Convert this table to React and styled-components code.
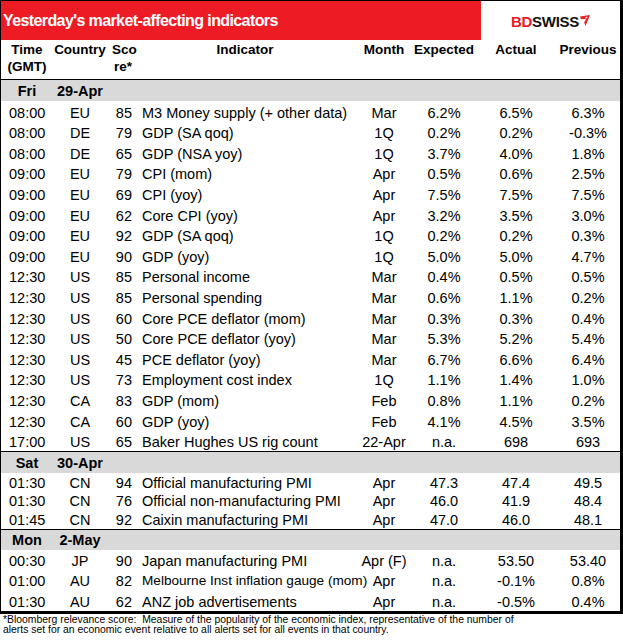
import React from "react";
import styled, { createGlobalStyle } from "styled-components";

const GlobalStyle = createGlobalStyle`
  body {
    margin: 0;
    background: #ffffff;
    font-family: "Liberation Sans", Arial, sans-serif;
    color: #000000;
  }
`;

const COLS = "52px 54px 27px 222px 56px 64px 80px 64px";

const sections = [
  {
    day: "Fri",
    date: "29-Apr",
    rowH: 20.6,
    dayH: 21,
    rule: false,
    rows: [
      ["08:00", "EU", "85", "M3 Money supply (+ other data)", "Mar", "6.2%", "6.5%", "6.3%"],
      ["08:00", "DE", "79", "GDP (SA qoq)", "1Q", "0.2%", "0.2%", "-0.3%"],
      ["08:00", "DE", "65", "GDP (NSA yoy)", "1Q", "3.7%", "4.0%", "1.8%"],
      ["09:00", "EU", "79", "CPI (mom)", "Apr", "0.5%", "0.6%", "2.5%"],
      ["09:00", "EU", "69", "CPI (yoy)", "Apr", "7.5%", "7.5%", "7.5%"],
      ["09:00", "EU", "62", "Core CPI (yoy)", "Apr", "3.2%", "3.5%", "3.0%"],
      ["09:00", "EU", "92", "GDP (SA qoq)", "1Q", "0.2%", "0.2%", "0.3%"],
      ["09:00", "EU", "90", "GDP (yoy)", "1Q", "5.0%", "5.0%", "4.7%"],
      ["12:30", "US", "85", "Personal income", "Mar", "0.4%", "0.5%", "0.5%"],
      ["12:30", "US", "85", "Personal spending", "Mar", "0.6%", "1.1%", "0.2%"],
      ["12:30", "US", "60", "Core PCE deflator (mom)", "Mar", "0.3%", "0.3%", "0.4%"],
      ["12:30", "US", "50", "Core PCE deflator (yoy)", "Mar", "5.3%", "5.2%", "5.4%"],
      ["12:30", "US", "45", "PCE deflator (yoy)", "Mar", "6.7%", "6.6%", "6.4%"],
      ["12:30", "US", "73", "Employment cost index", "1Q", "1.1%", "1.4%", "1.0%"],
      ["12:30", "CA", "83", "GDP (mom)", "Feb", "0.8%", "1.1%", "0.2%"],
      ["12:30", "CA", "60", "GDP (yoy)", "Feb", "4.1%", "4.5%", "3.5%"],
      ["17:00", "US", "65", "Baker Hughes US rig count", "22-Apr", "n.a.", "698", "693"],
    ],
  },
  {
    day: "Sat",
    date: "30-Apr",
    rowH: 18.6,
    dayH: 22,
    rule: true,
    rows: [
      ["01:30", "CN", "94", "Official manufacturing PMI", "Apr", "47.3", "47.4", "49.5"],
      ["01:30", "CN", "76", "Official non-manufacturing PMI", "Apr", "46.0", "41.9", "48.4"],
      ["01:45", "CN", "92", "Caixin manufacturing PMI", "Apr", "47.0", "46.0", "48.1"],
    ],
  },
  {
    day: "Mon",
    date: "2-May",
    rowH: 20.3,
    dayH: 21,
    rule: true,
    rows: [
      ["00:30", "JP", "90", "Japan manufacturing PMI", "Apr (F)", "n.a.", "53.50", "53.40"],
      ["01:00", "AU", "82", "Melbourne Inst inflation gauge (mom)", "Apr", "n.a.", "-0.1%", "0.8%", true],
      ["01:30", "AU", "62", "ANZ job advertisements", "Apr", "n.a.", "-0.5%", "0.4%"],
    ],
  },
];

const Frame = styled.div`
  width: 619px;
  border-top: 1px solid #000;
  border-left: 1px solid #000;
  border-right: 3px solid #000;
  border-bottom: 3px solid #000;
`;

const Banner = styled.div`
  display: flex;
  height: 39px;
`;

const Title = styled.div`
  width: 480px;
  background: #ed1c24;
  color: #ffffff;
  font-weight: bold;
  font-size: 16px;
  letter-spacing: -0.6px;
  display: flex;
  align-items: center;
  padding-left: 2px;
  box-sizing: border-box;
`;

const LogoBox = styled.div`
  flex: 1;
  background: #ffffff;
  display: flex;
  align-items: center;
  justify-content: center;
  padding-top: 1px;
`;

const Logo = styled.div`
  display: flex;
  align-items: center;
  font-weight: bold;
  font-size: 15px;
  letter-spacing: -0.3px;
  line-height: 1;
  span.bd {
    color: #ed1c24;
  }
  span.sw {
    color: #111111;
  }
  svg {
    margin-left: 1px;
    margin-top: -2px;
  }
`;

const Row = styled.div`
  display: grid;
  grid-template-columns: ${COLS};
  height: ${(p) => p.$h}px;
  box-sizing: border-box;
  align-items: ${(p) => (p.$middle ? "center" : "end")};
  background: ${(p) => (p.$grey ? "#d9d9d9" : "transparent")};
  border-top: ${(p) => (p.$rule ? "1px solid #000" : "none")};
`;

const HeadRow = styled(Row)`
  align-items: start;
  border-bottom: 1px solid #000;
  padding-top: 1px;
`;

const Head = styled.div`
  font-weight: bold;
  font-size: 13.5px;
  line-height: 17px;
  text-align: center;
  white-space: nowrap;
  margin-left: ${(p) => p.$shift || 0}px;
`;

const Cell = styled.div`
  font-size: ${(p) => (p.$small ? 13.6 : 14.5)}px;
  line-height: 16px;
  white-space: nowrap;
  text-align: ${(p) => p.$align || "center"};
  padding-left: ${(p) => p.$pl || 0}px;
  padding-right: ${(p) => p.$pr || 0}px;
  padding-bottom: 1px;
`;

const DayCell = styled.div`
  font-weight: bold;
  font-size: 14.5px;
  line-height: 16px;
  text-align: center;
`;

const Footnote = styled.div`
  font-size: 10.4px;
  line-height: 10.5px;
  padding: 1px 0 0 3px;
  white-space: nowrap;
`;

const Arrow = () => (
  <svg width="10" height="11" viewBox="0 0 10 11">
    <polygon points="0,1.5 10,0 5.5,11 4.2,7.6 6.2,3.8 1,4.3" fill="#ed1c24" />
    <path d="M6.4 1.6 V3.4 M5.5 2.5 H7.3" stroke="#fff" strokeWidth="0.8" />
  </svg>
);

const DataRow = ({ r, h }) => (
  <Row $h={h}>
    <Cell $align="left" $pl={8}>{r[0]}</Cell>
    <Cell>{r[1]}</Cell>
    <Cell $align="right" $pr={2}>{r[2]}</Cell>
    <Cell $align="left" $pl={8} $small={r[8]}>{r[3]}</Cell>
    <Cell>{r[4]}</Cell>
    <Cell>{r[5]}</Cell>
    <Cell>{r[6]}</Cell>
    <Cell>{r[7]}</Cell>
  </Row>
);

export default function App() {
  return (
    <>
      <GlobalStyle />
      <Frame>
        <Banner>
          <Title>Yesterday's market-affecting indicators</Title>
          <LogoBox>
            <Logo>
              <span className="bd">BD</span>
              <span className="sw">SWISS</span>
              <Arrow />
            </Logo>
          </LogoBox>
        </Banner>
        <HeadRow $h={40}>
          <Head>Time<br />(GMT)</Head>
          <Head>Country</Head>
          <Head $shift={5}>Sco<br />re*</Head>
          <Head>Indicator</Head>
          <Head>Month</Head>
          <Head>Expected</Head>
          <Head>Actual</Head>
          <Head>Previous</Head>
        </HeadRow>
        {sections.map((s) => (
          <React.Fragment key={s.day}>
            <Row $h={s.dayH} $grey $middle $rule={s.rule}>
              <DayCell>{s.day}</DayCell>
              <DayCell>{s.date}</DayCell>
            </Row>
            {s.rows.map((r, i) => (
              <DataRow key={i} r={r} h={s.rowH} />
            ))}
          </React.Fragment>
        ))}
      </Frame>
      <Footnote>
        *Bloomberg relevance score:&nbsp; Measure of the popularity of the economic index, representative of the number of
        <br />
        alerts set for an economic event relative to all alerts set for all events in that country.
      </Footnote>
    </>
  );
}
